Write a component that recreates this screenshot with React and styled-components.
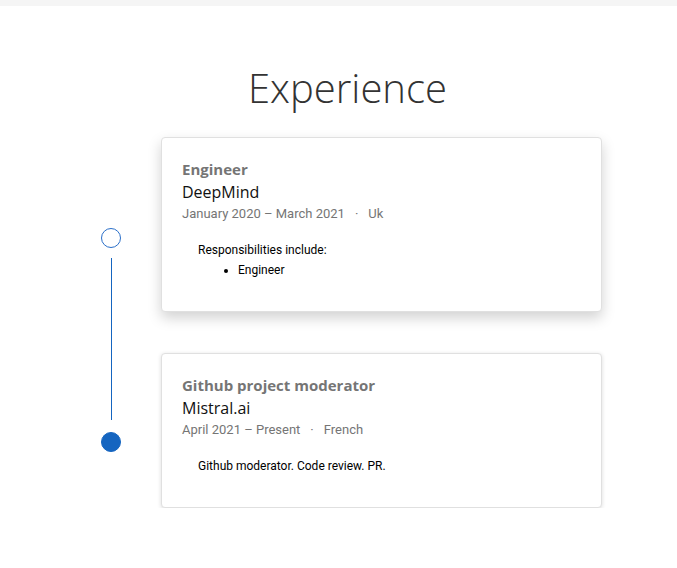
import styled, { createGlobalStyle } from "styled-components";

const GlobalStyle = createGlobalStyle`
  html, body {
    margin: 0;
    padding: 0;
    background: #ffffff;
  }
  * {
    box-sizing: border-box;
  }
`;

const experiences = [
  {
    title: "Engineer",
    company: "DeepMind",
    dates: "January 2020 – March 2021",
    location: "Uk",
    intro: "Responsibilities include:",
    items: ["Engineer"],
    raised: true,
  },
  {
    title: "Github project moderator",
    company: "Mistral.ai",
    dates: "April 2021 – Present",
    location: "French",
    intro: "Github moderator. Code review. PR.",
    items: [],
    raised: false,
  },
];

const TopBar = styled.div`
  height: 6px;
  background: #f5f5f5;
`;

const Section = styled.section`
  padding-top: 58px;
  width: 677px;
`;

const Heading = styled.h1`
  margin: 0 0 25px;
  text-align: center;
  font-family: "Open Sans", "Liberation Sans", sans-serif;
  font-weight: 300;
  font-size: 40px;
  line-height: 48px;
  color: #333333;
  padding-left: 18px;
`;

const Row = styled.div`
  display: flex;
  gap: 40px;
  padding-left: 101px;
`;

const Timeline = styled.div`
  display: flex;
  flex-direction: column;
  align-items: center;
  width: 20px;
  padding-top: 91px;
`;

const Dot = styled.div`
  width: 20px;
  height: 20px;
  border-radius: 50%;
  border: 1.5px solid ${(p) => (p.$filled ? "#1565c0" : "#2a6fc9")};
  background: ${(p) => (p.$filled ? "#1565c0" : "#ffffff")};
`;

const Line = styled.div`
  width: 1px;
  height: 162px;
  margin: 10px 0 12px;
  background: #1565c0;
`;

const Cards = styled.div`
  display: flex;
  flex-direction: column;
  gap: 41px;
`;

const Card = styled.article`
  width: 441px;
  padding: 20px 20px 31px;
  background: #ffffff;
  border: 1px solid #e0e0e0;
  border-radius: 4px;
  box-shadow: ${(p) =>
    p.$raised
      ? "0 6px 14px rgba(0, 0, 0, 0.18)"
      : "0 1px 4px rgba(0, 0, 0, 0.14)"};
`;

const Title = styled.div`
  font-family: "Open Sans", "Liberation Sans", sans-serif;
  font-weight: 700;
  font-size: 15px;
  line-height: 22px;
  color: #757575;
`;

const Company = styled.div`
  font-family: "Open Sans", "Liberation Sans", sans-serif;
  font-size: 16px;
  line-height: 24px;
  color: #111111;
`;

const Meta = styled.div`
  font-family: Roboto, "Liberation Sans", sans-serif;
  font-size: 13px;
  line-height: 20px;
  color: #757575;
`;

const Sep = styled.span`
  margin: 0 10px;
`;

const Body = styled.div`
  margin-top: 16px;
  padding-left: 16px;
  font-family: Roboto, "Liberation Sans", sans-serif;
  font-size: 12px;
  line-height: 20px;
  color: #000000;
`;

const List = styled.ul`
  margin: 0;
  padding-left: 40px;
`;

export default function App() {
  return (
    <>
      <GlobalStyle />
      <TopBar />
      <Section>
        <Heading>Experience</Heading>
        <Row>
          <Timeline>
            <Dot />
            <Line />
            <Dot $filled />
          </Timeline>
          <Cards>
            {experiences.map((e) => (
              <Card key={e.company} $raised={e.raised}>
                <Title>{e.title}</Title>
                <Company>{e.company}</Company>
                <Meta>
                  {e.dates}
                  <Sep>·</Sep>
                  {e.location}
                </Meta>
                <Body>
                  {e.intro}
                  {e.items.length > 0 && (
                    <List>
                      {e.items.map((it) => (
                        <li key={it}>{it}</li>
                      ))}
                    </List>
                  )}
                </Body>
              </Card>
            ))}
          </Cards>
        </Row>
      </Section>
    </>
  );
}
